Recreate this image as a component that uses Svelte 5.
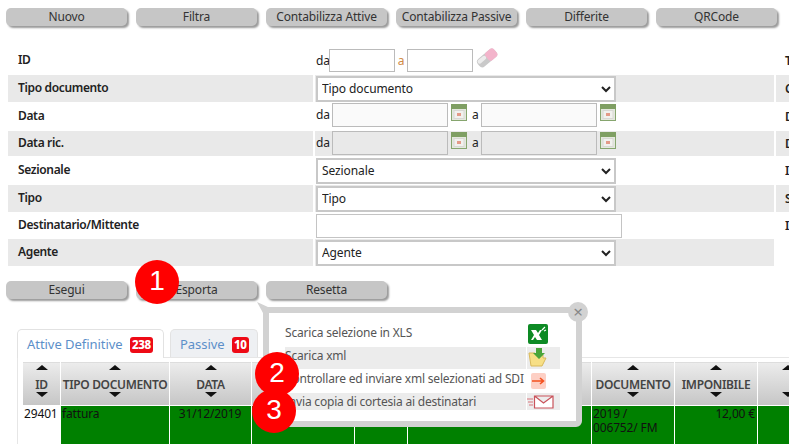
<script>
  const topButtons = ['Nuovo', 'Filtra', 'Contabilizza Attive', 'Contabilizza Passive', 'Differite', 'QRCode'];
  const bottomButtons = ['Esegui', 'Esporta', 'Resetta'];
  const cols = [
    { label: 'ID', w: 37 },
    { label: 'TIPO DOCUMENTO', w: 108 },
    { label: 'DATA', w: 81 },
    { label: '', w: 102 },
    { label: '', w: 52 },
    { label: '', w: 183 },
    { label: 'DOCUMENTO', w: 82 },
    { label: 'IMPONIBILE', w: 82 },
    { label: '', w: 60 }
  ];
  const cells = [
    { t: '29401', c: 'white' }, { t: 'fattura', c: '' }, { t: '31/12/2019', c: 'center' },
    { t: '', c: '' }, { t: '', c: '' }, { t: '', c: '' },
    { t: '2019 / 006752/ FM', c: '' }, { t: '12,00 €', c: 'right' }, { t: '', c: '' }
  ];
</script>

{#snippet cal()}
  <svg class="cal" width="16" height="17" viewBox="0 0 16 17">
    <rect x="0.5" y="0.5" width="15" height="16" fill="#e4e8de" stroke="#86a56e"/>
    <rect x="0" y="0" width="16" height="5" fill="#7f9f63"/>
    <rect x="3" y="6.500" width="10" height="8" fill="#f1f1ee" stroke="#d8d8d4"/>
    <rect x="6" y="9" width="4" height="3" fill="#e39a88"/>
  </svg>
{/snippet}

<div class="page">
  <div class="btnrow">
    {#each topButtons as b}<button class="btn">{b}</button>{/each}
  </div>

  <div class="form">
    <div class="r h27">
      <div class="l">ID</div>
      <div class="v small"><span class="da">da</span><input class="idin" /><span class="oa">a</span><input class="idin" />
        <svg class="eraser" width="22" height="20" viewBox="0 0 22 20">
          <g transform="rotate(-40 11 10)">
            <rect x="0" y="5" width="22" height="10" rx="4" fill="#c9c9c9"/>
            <rect x="11" y="5" width="11" height="10" rx="3" fill="#f3b4cb"/>
            <rect x="1" y="6" width="10" height="4" rx="2" fill="#ececec"/>
          </g>
        </svg>
      </div>
      <div class="x">T</div>
    </div>
    <div class="r g h27">
      <div class="l">Tipo documento</div>
      <div class="v"><select><option>Tipo documento</option></select></div>
      <div class="x">C</div>
    </div>
    <div class="r h27">
      <div class="l">Data</div>
      <div class="v dates"><span class="da2">da</span><input class="dt" />{@render cal()}<span class="a2">a</span><input class="dt" />{@render cal()}</div>
      <div class="x">D</div>
    </div>
    <div class="r g h25">
      <div class="l">Data ric.</div>
      <div class="v dates"><span class="da2">da</span><input class="dt off" />{@render cal()}<span class="a2">a</span><input class="dt off" />{@render cal()}</div>
      <div class="x">D</div>
    </div>
    <div class="r h27">
      <div class="l">Sezionale</div>
      <div class="v"><select><option>Sezionale</option></select></div>
      <div class="x">I</div>
    </div>
    <div class="r g h27">
      <div class="l">Tipo</div>
      <div class="v"><select><option>Tipo</option></select></div>
      <div class="x">S</div>
    </div>
    <div class="r h25">
      <div class="l">Destinatario/Mittente</div>
      <div class="v"><input class="dest" /></div>
      <div class="x">I</div>
    </div>
    <div class="r g nox h27">
      <div class="l">Agente</div>
      <div class="v"><select><option>Agente</option></select></div>
      <div class="x"></div>
    </div>
  </div>

  <div class="btnrow low">
    {#each bottomButtons as b}<button class="btn">{b}</button>{/each}
  </div>

  <div class="tabs">
    <div class="tab on">Attive Definitive <b class="badge">238</b></div>
    <div class="tab">Passive <b class="badge">10</b></div>
  </div>

  <div class="panel">
    <div class="grid">
      {#each cols as c}
        <div class="th" style="width:{c.w}px">
          <i class="up"></i><span>{c.label}</span><i class="down"></i>
        </div>
      {/each}
    </div>
    <div class="grid">
      {#each cells as c, i}
        <div class="td {c.c}" style="width:{cols[i].w}px">{c.t}</div>
      {/each}
    </div>
  </div>

  <div class="pop">
    <span class="tail"></span>
    <span class="close">×</span>
    <div class="pr a"><span class="pt">Scarica selezione in XLS</span>
      <span class="pi i1">
        <svg width="20" height="20" viewBox="0 0 20 20">
          <rect width="20" height="20" rx="2" fill="#0d8a24"/>
          <path d="M3 6h5l2 3 2-3h2l-3 5 3 5H9l-2-3-2 3H3l3-5z" fill="#fff"/>
          <path d="M14 6l3-3M16 7l2-1" stroke="#fff" stroke-width="1.2"/>
        </svg>
      </span>
    </div>
    <div class="pr b g"><span class="pt">Scarica xml</span>
      <span class="pi i1">
        <svg width="20" height="19" viewBox="0 0 20 19">
          <path d="M1 5h6l2 2h6v3l3 0-4 8H3z" fill="#f7df86" stroke="#d9b95a"/>
          <path d="M8 0h6v5h3l-6 6-6-6h3z" fill="#4aa53a"/>
        </svg>
      </span>
    </div>
    <div class="pr c"><span class="pt">Controllare ed inviare xml selezionati ad SDI</span>
      <span class="pi i2">
        <svg width="15" height="16" viewBox="0 0 15 16">
          <rect width="15" height="16" rx="2" fill="#fdcfc4"/>
          <path d="M1 8h11M9 5l3.500 3-3.500 3" stroke="#f4511e" stroke-width="1.600" fill="none"/>
        </svg>
      </span>
    </div>
    <div class="pr d g"><span class="pt">Invia copia di cortesia ai destinatari</span>
      <span class="pi i3">
        <svg width="27" height="14" viewBox="0 0 27 14">
          <path d="M7.500 1h18.500v12H7.500zM7.500 1l9 7 9.500-7" fill="#fff" stroke="#c9525a" stroke-width="1.200"/>
          <path d="M0 4h6M1 7h5M2 10h4" stroke="#d9737a" stroke-width="1.200"/>
        </svg>
      </span>
    </div>
  </div>

  <div class="dot d1">1</div>
  <div class="dot d2">2</div>
  <div class="dot d3">3</div>
</div>

<style>
  :global(body) { margin: 0; }
  .page {
    position: relative;
    width: 789px;
    height: 444px;
    overflow: hidden;
    background: #fff;
    font-family: "Noto Sans", "Open Sans", sans-serif;
    font-size: 12px;
    letter-spacing: -0.15px;
    color: #222;
  }
  .btnrow {
    display: flex;
    gap: 9px;
    padding: 8px 0 0 6px;
  }
  .btnrow.low { padding-top: 15px; }
  .btn {
    width: 121px;
    height: 18px;
    padding: 0;
    border: 0;
    border-radius: 5px;
    background: #c6c6c6;
    box-shadow: 2px 2px 2px #9a9a9a;
    font: 12px "Noto Sans", "Open Sans", sans-serif;
    letter-spacing: -0.15px;
    color: #333;
    line-height: 16px;
    white-space: nowrap;
  }
  .form {
    margin: 21px 0 0 8px;
    width: 781px;
    overflow: hidden;
  }
  .r {
    display: grid;
    grid-template-columns: 305px 459px 120px;
    column-gap: 2px;
    align-items: stretch;
  }
  .h27 { height: 27px; }
  .h25 { height: 25px; }
  .r + .r { margin-top: 1px; }
  .r > div { display: flex; align-items: center; }
  .r.g > div { background: #e9e9e9; }
  .r.nox > .x { background: none; }
  .l {
    padding: 0 0 3px 10px;
    font-weight: 600;
    color: #222;
    letter-spacing: -0.35px;
  }
  .x { padding-left: 9px; font-weight: 600; }
  .v { padding-left: 1px; }
  .da { width: 13px; }
  .idin {
    box-sizing: border-box;
    width: 66px;
    height: 23px;
    border: 1px solid #bbb;
    margin: 0;
    padding: 0;
    background: #fff;
  }
  .oa { width: 12px; text-align: center; color: #d08a45; }
  .eraser { margin-left: 3px; margin-top: -5px; }
  select {
    box-sizing: border-box;
    width: 300px;
    height: 26px;
    border: 2px solid #c8c8c8;
    border-radius: 0;
    background: #fff;
    font: 12px "Noto Sans", "Open Sans", sans-serif;
    letter-spacing: -0.1px;
    color: #222;
    padding: 0;
  }
  .dest {
    box-sizing: border-box;
    width: 306px;
    height: 24px;
    border: 1px solid #c4c4c4;
    margin: 0;
    background: #fff;
  }
  .r > .dates { align-items: flex-start; }
  .da2, .a2 { line-height: 24px; }
  .da2 { width: 16px; }
  .a2 { width: 9px; margin-left: 5px; }
  .dt {
    box-sizing: border-box;
    width: 116px;
    height: 24px;
    border: 1px solid #bbb;
    margin: 0;
    padding: 0;
    background: #fafafa;
  }
  .dt.off { background: #e9e9e9; }
  .cal { margin: 1px 0 0 3px; }
  .tabs {
    display: flex;
    gap: 6px;
    margin: 30px 0 0 17px;
    height: 28px;
  }
  .tab {
    box-sizing: border-box;
    height: 28px;
    padding: 5px 5px 0 9px;
    border: 1px solid #e2e2e2;
    border-bottom: 0;
    border-radius: 5px 5px 0 0;
    background: #eef0f3;
    color: #5c8fc9;
    font-size: 13px;
    letter-spacing: -0.05px;
    width: 88px;
    white-space: nowrap;
  }
  .tab.on { background: #fff; width: 147px; height: 29px; position: relative; z-index: 1; }
  .badge {
    display: inline-block;
    margin-left: 4px;
    padding: 0 2px;
    background: #ee0a16;
    border-radius: 3px;
    color: #fff;
    font-size: 11.5px;
    font-weight: 800;
    letter-spacing: -0.3px;
    line-height: 16px;
  }
  .panel {
    margin-left: 17px;
    padding: 4px 0 0 5px;
    border-top: 1px solid #e6e6e6;
    border-left: 1px solid #e6e6e6;
    width: 900px;
    box-sizing: border-box;
  }
  .grid { display: flex; gap: 1px; }
  .th {
    box-sizing: border-box;
    flex: none;
    height: 43px;
    background: linear-gradient(#ececec, #c6c6c6);
    display: flex;
    flex-direction: column;
    align-items: center;
    padding-top: 2px;
    font-weight: 600;
    letter-spacing: -0.35px;
    color: #444;
    white-space: nowrap;
    border-top: 1px solid #ddd;
  }
  .th span { line-height: 15px; min-height: 15px; margin: 7px 0 0; }
  .up, .down { display: block; width: 0; height: 0; border: 6px solid transparent; }
  .up { border-top: 0; border-bottom: 5px solid #111; }
  .down { border-bottom: 0; border-top: 5px solid #111; }
  .grid + .grid { margin-top: 1px; }
  .td {
    box-sizing: border-box;
    flex: none;
    height: 60px;
    background: #008000;
    padding: 1px 2px 0 1px;
    color: #111;
    line-height: 14px;
  }
  .td.white { background: #fff; padding-left: 1px; }
  .td.center { text-align: center; }
  .td.right { text-align: right; }
  .pop {
    position: absolute;
    left: 263px;
    top: 307px;
    width: 319px;
    height: 120px;
    box-sizing: border-box;
    padding: 10px 16px 0 16px;
    background: #fff;
    border: 6px solid #d2d2d2;
    border-radius: 0 6px 6px 6px;
    color: #555;
    letter-spacing: -0.2px;
  }
  .tail {
    position: absolute;
    left: -12px;
    top: -11px;
    width: 12px;
    height: 11px;
    background: #d2d2d2;
    clip-path: polygon(0 0, 100% 50%, 100% 100%, 50% 100%);
  }
  .close {
    position: absolute;
    right: -12px;
    top: -11px;
    width: 20px;
    height: 20px;
    line-height: 19px;
    border-radius: 50%;
    background: #d2d2d2;
    text-align: center;
    font-size: 17px;
    color: #888;
  }
  .pr {
    display: flex;
    gap: 1px;
  }
  .pr.a { height: 24px; }
  .pr.b { height: 22px; }
  .pr.c { height: 24px; }
  .pr.d { height: 17px; }
  .pr.g .pt, .pr.g .pi { background: #ececec; }
  .pt {
    width: 241px;
    line-height: 17px;
    white-space: nowrap;
  }
  .pr.a .pt, .pr.c .pt { padding-top: 1px; }
  .pi {
    width: 33px;
    height: 100%;
    display: flex;
    align-items: flex-start;
    justify-content: flex-start;
    box-sizing: border-box;
  }
  .pi.i1 { padding: 1px 0 0 1px; }
  .pi.i2 { padding: 4px 0 0 4px; }
  .pi.i3 { padding: 2px 0 0 0; }
  .dot {
    position: absolute;
    width: 44px;
    height: 44px;
    border-radius: 50%;
    background: #f00;
    color: #fff;
    text-align: center;
    font: 28px/41px "Liberation Sans", sans-serif;
    letter-spacing: 0;
  }
  .d1 { left: 135px; top: 260px; }
  .d2 { left: 255px; top: 352px; }
  .d3 { left: 252px; top: 389px; }
</style>
